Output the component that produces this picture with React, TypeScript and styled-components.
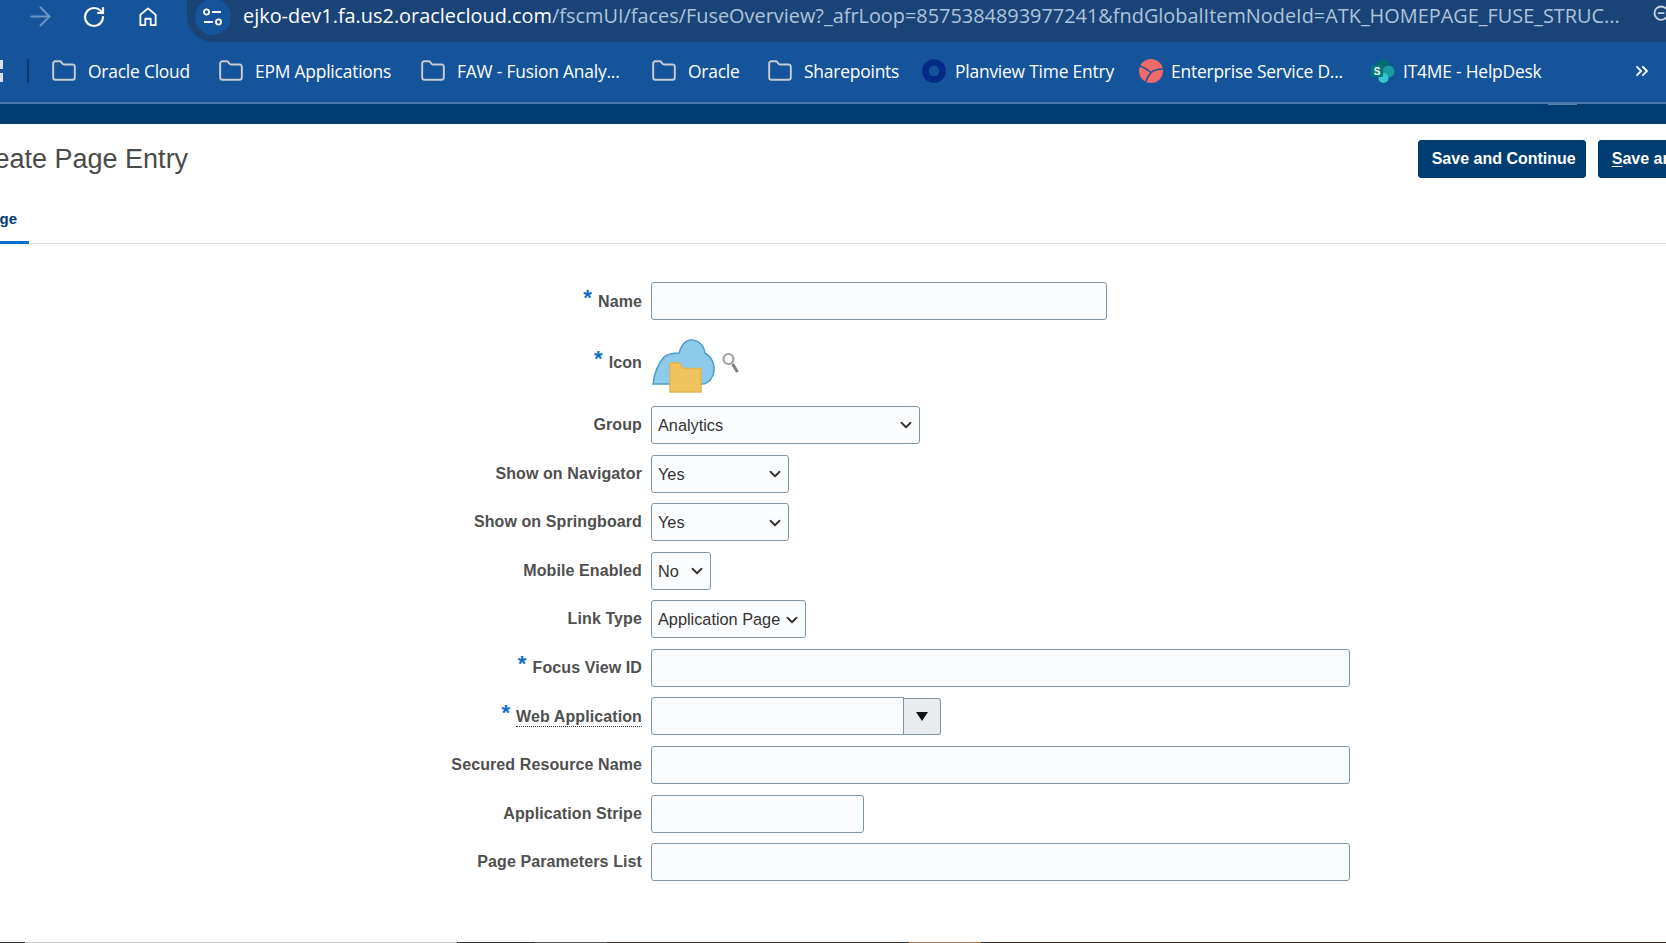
import React from 'react'
import styled, { createGlobalStyle } from 'styled-components'
import { ArrowRight, ChevronDown, ChevronsRight, Folder, RotateCw, ZoomOut } from 'lucide-react'

const GlobalStyle = createGlobalStyle`
  html, body {
    margin: 0;
    padding: 0;
    height: 100%;
    overflow: hidden;
    background: #ffffff;
  }
  #root {
    height: 100%;
  }
`

const Page = styled.div`
  display: flex;
  flex-direction: column;
  width: 1666px;
  height: 943px;
  overflow: hidden;
`

const Toolbar = styled.div`
  display: flex;
  flex: none;
  align-items: flex-start;
  height: 42px;
  padding-left: 31px;
  background: #15539a;
`

const NavButton = styled.div<{ $gap?: number }>`
  display: flex;
  flex: none;
  align-items: center;
  justify-content: center;
  width: 18px;
  height: 33px;
  margin-right: ${(p) => p.$gap ?? 36}px;
  color: #ffffff;
`

const AddressBar = styled.div`
  display: flex;
  flex: 1;
  align-items: flex-start;
  min-width: 0;
  height: 42px;
  margin-left: -6px;
  padding-left: 8px;
  border-radius: 0 0 0 26px;
  background: #1a4477;
`

const TuneBadge = styled.div`
  display: flex;
  flex: none;
  align-items: center;
  justify-content: center;
  width: 36px;
  height: 36px;
  margin-top: -1px;
  border-radius: 50%;
  background: #15539a;
`

const Url = styled.div`
  flex: none;
  width: 1385px;
  margin-left: 12px;
  overflow: hidden;
  font-family: 'Open Sans', sans-serif;
  font-size: 19.9px;
  line-height: 32px;
  white-space: nowrap;
  color: #aec3dc;
`

const UrlHost = styled.span`
  color: #ffffff;
`

const ZoomSlot = styled.div`
  display: flex;
  flex: none;
  align-items: center;
  height: 28px;
  margin-left: 24px;
  color: #c3d2e4;
`

const Bookmarks = styled.div`
  display: flex;
  flex: none;
  align-items: center;
  height: 58px;
  padding-bottom: 2px;
  border-bottom: 2px solid #4a78ad;
  background: #15539a;
`

const AppsGlyph = styled.div`
  flex: none;
  width: 3px;
  height: 22px;
  margin-right: 24px;
  background: repeating-linear-gradient(#d6dfea 0 9px, transparent 9px 13px);
`

const Separator = styled.div`
  flex: none;
  width: 2px;
  height: 24px;
  margin-right: 22px;
  background: #0c3a70;
`

const Bookmark = styled.div<{ $width: number; $iconGap?: number }>`
  display: flex;
  flex: none;
  align-items: center;
  gap: ${(p) => p.$iconGap ?? 11}px;
  width: ${(p) => p.$width}px;
  font-family: 'Open Sans', sans-serif;
  font-size: 17.4px;
  letter-spacing: -0.2px;
  white-space: nowrap;
  color: #ffffff;
`

const FolderIcon = styled(Folder)`
  flex: none;
  color: #c6ccd3;
`

const MoreButton = styled.div`
  display: flex;
  flex: none;
  align-items: center;
  margin-left: 74px;
  color: #ffffff;
`

const BrandBand = styled.div`
  display: flex;
  flex: none;
  justify-content: flex-end;
  height: 20px;
  padding-right: 89px;
  background: #003d73;
`

const BandMark = styled.div`
  width: 29px;
  height: 1px;
  background: #5a7fa8;
`

const Content = styled.main`
  display: flex;
  flex: 1;
  flex-direction: column;
  min-height: 0;
  background: #ffffff;
`

const Header = styled.div`
  display: flex;
  flex: none;
  align-items: flex-start;
  height: 85px;
  padding-top: 16px;
  box-sizing: border-box;
`

const Title = styled.h1`
  flex: none;
  margin: 2px 0 0 -34px;
  font-family: 'Liberation Sans', Arial, sans-serif;
  font-size: 27px;
  font-weight: 400;
  line-height: 34px;
  color: #4a4a4a;
`

const Actions = styled.div`
  display: flex;
  flex: none;
  gap: 12px;
  margin-left: auto;
  margin-right: -74px;
`

const ActionButton = styled.button`
  height: 38px;
  padding: 0 9px 0 13px;
  border: 1px solid #003d73;
  border-radius: 3px;
  background: #003d73;
  font-family: 'Liberation Sans', Arial, sans-serif;
  font-size: 16px;
  font-weight: 700;
  color: #ffffff;
  u {
    text-underline-offset: 2px;
  }
`

const TabBar = styled.div`
  flex: none;
  height: 34px;
  border-bottom: 1.5px solid #d9dce0;
`

const Tab = styled.div`
  display: flex;
  justify-content: flex-end;
  box-sizing: border-box;
  width: 29px;
  height: 35px;
  padding-right: 12px;
  overflow: hidden;
  border-bottom: 3px solid #0f6cc9;
  font-family: 'Liberation Sans', Arial, sans-serif;
  font-size: 15px;
  font-weight: 700;
  line-height: 20px;
  color: #003d73;
`

const Form = styled.form`
  display: flex;
  flex-direction: column;
  gap: 10.6px;
  padding-top: 38px;
`

const Row = styled.div<{ $height?: number }>`
  display: grid;
  grid-template-columns: 642px 1fr;
  column-gap: 9px;
  align-items: center;
  height: ${(p) => p.$height ?? 38}px;
`

const Label = styled.label`
  display: flex;
  justify-content: flex-end;
  align-items: baseline;
  font-family: 'Liberation Sans', Arial, sans-serif;
  font-size: 16px;
  font-weight: 700;
  letter-spacing: 0.1px;
  color: #4f4f4f;
`

const Required = styled.span`
  margin-right: 6px;
  font-size: 22px;
  line-height: 16px;
  color: #0f6cc9;
  transform: translateY(-2px);
`

const HintText = styled.span`
  border-bottom: 1px dotted #333333;
  line-height: 18px;
`

const TextInput = styled.input<{ $width: number }>`
  box-sizing: border-box;
  display: block;
  width: ${(p) => p.$width}px;
  height: 38px;
  padding: 0 6px;
  border: 1px solid #7d95a3;
  border-radius: 3px;
  background: #fbfcfe;
`

const Select = styled.div<{ $width: number }>`
  box-sizing: border-box;
  display: flex;
  align-items: center;
  justify-content: space-between;
  width: ${(p) => p.$width}px;
  height: 38px;
  padding: 1px 4px 0 6px;
  border: 1px solid #7d95a3;
  border-radius: 3px;
  background: #fbfcfe;
  font-family: 'Liberation Sans', Arial, sans-serif;
  font-size: 16.3px;
  color: #333333;
`

const Combo = styled.div`
  display: flex;
  align-items: stretch;
  margin-top: -1px;
`

const ComboInput = styled(TextInput)`
  border-radius: 3px 0 0 3px;
`

const ComboButton = styled.div`
  box-sizing: border-box;
  display: flex;
  flex: none;
  align-items: center;
  justify-content: center;
  width: 37px;
  height: 37px;
  margin-top: 1px;
  border: 1px solid #7d95a3;
  border-left: 0;
  border-radius: 0 3px 3px 0;
  background: #e8ecef;
`

const IconField = styled.div`
  display: flex;
  align-items: flex-start;
  gap: 6px;
  height: 55px;
  margin: 7px 0 0 1px;
`

const SearchSlot = styled.div`
  flex: none;
  margin-top: 13px;
`

const BottomStrip = styled.div`
  display: flex;
  flex: none;
  height: 1px;
`

const StripPart = styled.div<{ $color: string; $width?: number }>`
  flex: ${(p) => (p.$width ? 'none' : '1')};
  width: ${(p) => p.$width ?? 0}px;
  background: ${(p) => p.$color};
`

function HomeIcon() {
  return (
    <svg width="20" height="21" viewBox="0 0 20 21" fill="none" stroke="#fff" strokeWidth="2">
      <path d="M1.5 8.5 10 1.5l8.5 7V20H13v-7H7v7H1.5z" strokeLinejoin="round" />
    </svg>
  )
}

function TuneIcon() {
  return (
    <svg width="20" height="20" viewBox="0 0 20 20" fill="none" stroke="#fff" strokeWidth="1.8">
      <circle cx="3.5" cy="5" r="2.6" />
      <path d="M9 5h9M1 15h9" />
      <circle cx="15.5" cy="15" r="2.6" />
    </svg>
  )
}

function PlanviewIcon() {
  return (
    <svg width="24" height="24" viewBox="0 0 24 24" fill="none">
      <circle cx="12" cy="12" r="8.6" stroke="#022a86" strokeWidth="6.5" />
    </svg>
  )
}

function ServiceDeskIcon() {
  return (
    <svg width="24" height="24" viewBox="0 0 24 24">
      <circle cx="12" cy="12" r="12" fill="#f2696a" />
      <path
        d="M0 6.5C4 8 8 10 12 13.5 15 11 19 10 24 10M12 13.5C10 16 8 19 6.5 23"
        fill="none"
        stroke="#15539a"
        strokeWidth="1.6"
      />
    </svg>
  )
}

function SharePointIcon() {
  return (
    <svg width="24" height="24" viewBox="0 0 24 24">
      <circle cx="12" cy="7.5" r="7" fill="#036c70" />
      <circle cx="17.5" cy="12.5" r="6" fill="#1a9ba1" />
      <circle cx="12.5" cy="19" r="5" fill="#37c6d0" />
      <rect x="0" y="6" width="12" height="12" rx="1" fill="#03787c" />
      <text x="6" y="15.5" textAnchor="middle" fontFamily="Liberation Sans" fontSize="10" fontWeight="700" fill="#fff">
        S
      </text>
    </svg>
  )
}

function CloudFolderIcon() {
  return (
    <svg width="64" height="55" viewBox="0 0 64 55">
      <path
        d="M1 45C2 36 5 26 12 18 16 15 22 14 27 14 29 6 34 1 39 1 46 1 52 6 53 14 60 18 63 26 62 32 61 39 57 45 50 45Z"
        fill="#8ccbeb"
        stroke="#4f9cc6"
        strokeWidth="1.5"
      />
      <path d="M18 24h10l3 5.5h18V53H18z" fill="#f0c45c" stroke="#e2b357" strokeWidth="1.5" />
    </svg>
  )
}

function SearchIcon() {
  return (
    <svg width="17" height="22" viewBox="0 0 17 22" fill="none">
      <circle cx="6.5" cy="7" r="5" stroke="#a0a0a0" strokeWidth="2.2" />
      <path d="m10.5 12 5 8" stroke="#7f7f7f" strokeWidth="3" />
    </svg>
  )
}

function CaretIcon() {
  return (
    <svg width="14" height="11" viewBox="0 0 14 11">
      <path d="M1 1h12L7 10z" fill="#111" />
    </svg>
  )
}

const folders = [
  { name: 'Oracle Cloud', width: 167 },
  { name: 'EPM Applications', width: 202 },
  { name: 'FAW - Fusion Analy...', width: 231 },
  { name: 'Oracle', width: 116 },
]

function Caret() {
  return <ChevronDown size={18} strokeWidth={2.4} color="#333" />
}

export default function App() {
  return (
    <Page>
      <GlobalStyle />
      <Toolbar>
        <NavButton>
          <ArrowRight size={31} strokeWidth={1.5} color="#6f94c0" style={{ flex: 'none' }} />
        </NavButton>
        <NavButton>
          <RotateCw size={24} strokeWidth={2.2} style={{ flex: 'none' }} />
        </NavButton>
        <NavButton $gap={36}>
          <HomeIcon />
        </NavButton>
        <AddressBar>
          <TuneBadge>
            <TuneIcon />
          </TuneBadge>
          <Url>
            <UrlHost>ejko-dev1.fa.us2.oraclecloud.com</UrlHost>
            /fscmUI/faces/FuseOverview?_afrLoop=8575384893977241&amp;fndGlobalItemNodeId=ATK_HOMEPAGE_FUSE_STRUC...
          </Url>
          <ZoomSlot>
            <ZoomOut size={20} strokeWidth={2.2} />
          </ZoomSlot>
        </AddressBar>
      </Toolbar>

      <Bookmarks>
        <AppsGlyph />
        <Separator />
        {folders.map((f) => (
          <Bookmark key={f.name} $width={f.width}>
            <FolderIcon size={26} strokeWidth={1.8} />
            {f.name}
          </Bookmark>
        ))}
        <Bookmark $width={155}>
          <FolderIcon size={26} strokeWidth={1.8} />
          Sharepoints
        </Bookmark>
        <Bookmark $width={217} $iconGap={9}>
          <PlanviewIcon />
          Planview Time Entry
        </Bookmark>
        <Bookmark $width={232} $iconGap={8}>
          <ServiceDeskIcon />
          Enterprise Service D...
        </Bookmark>
        <Bookmark $width={187} $iconGap={8}>
          <SharePointIcon />
          IT4ME - HelpDesk
        </Bookmark>
        <MoreButton>
          <ChevronsRight size={20} strokeWidth={2.2} />
        </MoreButton>
      </Bookmarks>

      <BrandBand>
        <BandMark />
      </BrandBand>

      <Content>
        <Header>
          <Title>Create Page Entry</Title>
          <Actions>
            <ActionButton>Save and Continue</ActionButton>
            <ActionButton>
              <u>S</u>ave and Close
            </ActionButton>
          </Actions>
        </Header>
        <TabBar>
          <Tab>Page</Tab>
        </TabBar>

        <Form>
          <Row>
            <Label>
              <Required>*</Required>Name
            </Label>
            <TextInput $width={456} />
          </Row>
          <Row $height={64.8}>
            <Label>
              <Required>*</Required>Icon
            </Label>
            <IconField>
              <CloudFolderIcon />
              <SearchSlot>
                <SearchIcon />
              </SearchSlot>
            </IconField>
          </Row>
          <Row>
            <Label>Group</Label>
            <Select $width={269}>
              Analytics
              <Caret />
            </Select>
          </Row>
          <Row>
            <Label>Show on Navigator</Label>
            <Select $width={138}>
              Yes
              <Caret />
            </Select>
          </Row>
          <Row>
            <Label>Show on Springboard</Label>
            <Select $width={138}>
              Yes
              <Caret />
            </Select>
          </Row>
          <Row>
            <Label>Mobile Enabled</Label>
            <Select $width={60}>
              No
              <Caret />
            </Select>
          </Row>
          <Row>
            <Label>Link Type</Label>
            <Select $width={155}>
              Application Page
              <Caret />
            </Select>
          </Row>
          <Row>
            <Label>
              <Required>*</Required>Focus View ID
            </Label>
            <TextInput $width={699} />
          </Row>
          <Row>
            <Label>
              <Required>*</Required>
              <HintText>Web Application</HintText>
            </Label>
            <Combo>
              <ComboInput $width={253} />
              <ComboButton>
                <CaretIcon />
              </ComboButton>
            </Combo>
          </Row>
          <Row>
            <Label>Secured Resource Name</Label>
            <TextInput $width={699} />
          </Row>
          <Row>
            <Label>Application Stripe</Label>
            <TextInput $width={213} />
          </Row>
          <Row>
            <Label>Page Parameters List</Label>
            <TextInput $width={699} />
          </Row>
        </Form>
      </Content>

      <BottomStrip>
        <StripPart $color="#333" $width={25} />
        <StripPart $color="#c8c8c8" $width={432} />
        <StripPart $color="#333" $width={77} />
        <StripPart $color="#555" $width={73} />
        <StripPart $color="#3a3530" $width={302} />
        <StripPart $color="#b0713a" $width={72} />
        <StripPart $color="#3a2e28" />
      </BottomStrip>
    </Page>
  )
}
